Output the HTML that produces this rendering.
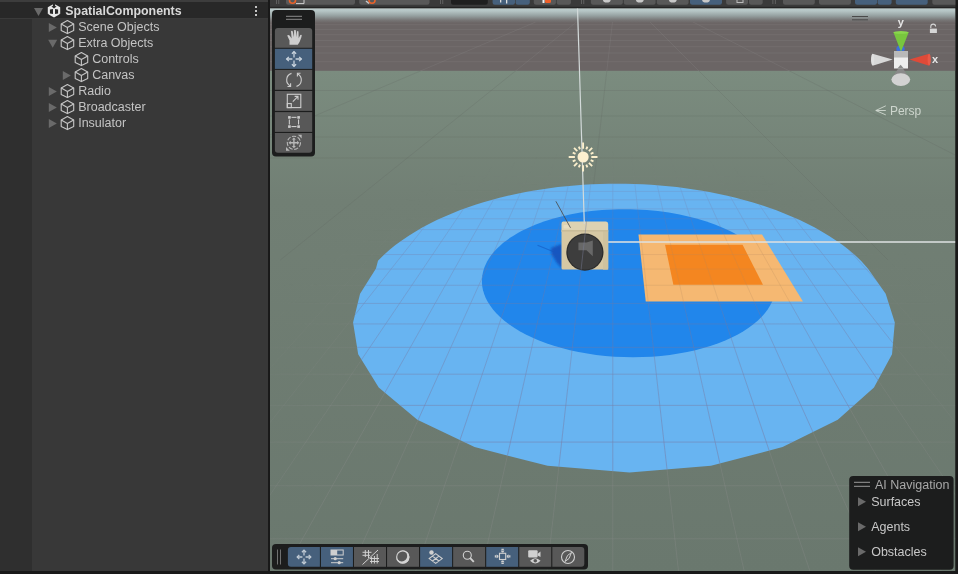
<!DOCTYPE html><html><head><meta charset="utf-8"><style>html,body{margin:0;padding:0;background:#191919;overflow:hidden}svg{display:block;will-change:transform}text{font-family:"Liberation Sans",sans-serif}</style></head><body><svg width="958" height="574" viewBox="0 0 958 574"><defs><linearGradient id="sky" x1="0" y1="8.4" x2="0" y2="23" gradientUnits="userSpaceOnUse"><stop offset="0" stop-color="#bdcccc"/><stop offset="0.18" stop-color="#b5c5c5"/><stop offset="0.5" stop-color="#96a1a1"/><stop offset="0.82" stop-color="#767474"/><stop offset="1" stop-color="#6b6565"/></linearGradient><linearGradient id="gnd" x1="0" y1="71" x2="0" y2="571" gradientUnits="userSpaceOnUse"><stop offset="0" stop-color="#7b8c7f"/><stop offset="0.26" stop-color="#717f74"/><stop offset="1" stop-color="#6a786e"/></linearGradient><linearGradient id="gfade" x1="0" y1="150" x2="0" y2="480" gradientUnits="userSpaceOnUse"><stop offset="0" stop-color="#fff" stop-opacity="0.3"/><stop offset="0.35" stop-color="#fff" stop-opacity="0.6"/><stop offset="1" stop-color="#fff" stop-opacity="1"/></linearGradient><radialGradient id="rfade" cx="612" cy="620" r="470" gradientUnits="userSpaceOnUse"><stop offset="0" stop-color="#fff"/><stop offset="0.68" stop-color="#fff"/><stop offset="1" stop-color="#fff" stop-opacity="0"/></radialGradient><mask id="rm"><rect x="0" y="0" width="958" height="574" fill="url(#rfade)"/></mask><mask id="gm"><rect x="0" y="0" width="958" height="574" fill="url(#gfade)"/></mask><clipPath id="sc"><rect x="270" y="8.4" width="685.5" height="562.6"/></clipPath><filter id="blur1" x="-50%" y="-50%" width="200%" height="200%"><feGaussianBlur stdDeviation="1.6"/></filter><filter id="blur0" x="-50%" y="-50%" width="200%" height="200%"><feGaussianBlur stdDeviation="0.8"/></filter></defs><rect x="0" y="0" width="268" height="571" fill="#383838"/><rect x="0" y="0" width="268" height="2" fill="#3d3d3d"/><rect x="0" y="2" width="268" height="16" fill="#282828"/><rect x="0" y="18" width="268" height="1" fill="#3a3a3a"/><rect x="0" y="19" width="32" height="552" fill="#2f2f2f"/><path d="M34 8 L43 8 L38.5 16 Z" fill="#6a6a6a"/><path d="M54 3.8 L60.2 7.3 L60.2 14 L54 17.5 L47.8 14 L47.8 7.3 Z" fill="#e8e8e8"/><path d="M52.9 3.6 L55.1 3.6 L55.1 6.1 L56.6 6.5 L54 8.6 L51.4 6.5 L52.9 6.1 Z" fill="#282828"/><path d="M49.9 9.6 L53 8.9 L53 13.9 L49.9 13.4 Z" fill="#282828"/><path d="M58.1 9.6 L55 8.9 L55 13.9 L58.1 13.4 Z" fill="#282828"/><path d="M47.8 13.4 L49.2 14.4 L47.8 14.4 Z M60.2 13.4 L58.8 14.4 L60.2 14.4 Z" fill="#282828"/><text x="65.3" y="14.8" font-size="12.4" font-weight="bold" fill="#d9d9d9">SpatialComponents</text><rect x="255" y="6" width="2" height="2" fill="#c4c4c4"/><rect x="255" y="10" width="2" height="2" fill="#c4c4c4"/><rect x="255" y="14" width="2" height="2" fill="#c4c4c4"/><path d="M48.8 23.0 L56.8 27.5 L48.8 32.0 Z" fill="#6a6a6a"/><g fill="none" stroke="#c6c6c6" stroke-width="1.1" stroke-linejoin="round"><path d="M67.4 20.6 L73.7 24.0 L73.7 30.5 L67.4 33.6 L61.2 30.5 L61.2 24.0 Z"/><path d="M61.2 24.0 L67.4 27.5 L73.7 24.0 M67.4 27.5 L67.4 33.6"/></g><text x="78.2" y="30.9" font-size="12.5" fill="#c4c4c4">Scene Objects</text><path d="M48.2 39.7 L57.2 39.7 L52.7 47.7 Z" fill="#6a6a6a"/><g fill="none" stroke="#c6c6c6" stroke-width="1.1" stroke-linejoin="round"><path d="M67.4 36.6 L73.7 40.0 L73.7 46.5 L67.4 49.6 L61.2 46.5 L61.2 40.0 Z"/><path d="M61.2 40.0 L67.4 43.5 L73.7 40.0 M67.4 43.5 L67.4 49.6"/></g><text x="78.2" y="46.9" font-size="12.5" fill="#c4c4c4">Extra Objects</text><g fill="none" stroke="#c6c6c6" stroke-width="1.1" stroke-linejoin="round"><path d="M81.4 52.6 L87.7 56.0 L87.7 62.5 L81.4 65.6 L75.2 62.5 L75.2 56.0 Z"/><path d="M75.2 56.0 L81.4 59.5 L87.7 56.0 M81.4 59.5 L81.4 65.6"/></g><text x="92.2" y="62.9" font-size="12.5" fill="#c4c4c4">Controls</text><path d="M62.8 71.0 L70.8 75.5 L62.8 80.0 Z" fill="#6a6a6a"/><g fill="none" stroke="#c6c6c6" stroke-width="1.1" stroke-linejoin="round"><path d="M81.4 68.6 L87.7 72.0 L87.7 78.5 L81.4 81.6 L75.2 78.5 L75.2 72.0 Z"/><path d="M75.2 72.0 L81.4 75.5 L87.7 72.0 M81.4 75.5 L81.4 81.6"/></g><text x="92.2" y="78.9" font-size="12.5" fill="#c4c4c4">Canvas</text><path d="M48.8 87.0 L56.8 91.5 L48.8 96.0 Z" fill="#6a6a6a"/><g fill="none" stroke="#c6c6c6" stroke-width="1.1" stroke-linejoin="round"><path d="M67.4 84.6 L73.7 88.0 L73.7 94.5 L67.4 97.6 L61.2 94.5 L61.2 88.0 Z"/><path d="M61.2 88.0 L67.4 91.5 L73.7 88.0 M67.4 91.5 L67.4 97.6"/></g><text x="78.2" y="94.9" font-size="12.5" fill="#c4c4c4">Radio</text><path d="M48.8 103.0 L56.8 107.5 L48.8 112.0 Z" fill="#6a6a6a"/><g fill="none" stroke="#c6c6c6" stroke-width="1.1" stroke-linejoin="round"><path d="M67.4 100.6 L73.7 104.0 L73.7 110.5 L67.4 113.6 L61.2 110.5 L61.2 104.0 Z"/><path d="M61.2 104.0 L67.4 107.5 L73.7 104.0 M67.4 107.5 L67.4 113.6"/></g><text x="78.2" y="110.9" font-size="12.5" fill="#c4c4c4">Broadcaster</text><path d="M48.8 119.0 L56.8 123.5 L48.8 128.0 Z" fill="#6a6a6a"/><g fill="none" stroke="#c6c6c6" stroke-width="1.1" stroke-linejoin="round"><path d="M67.4 116.6 L73.7 120.0 L73.7 126.5 L67.4 129.6 L61.2 126.5 L61.2 120.0 Z"/><path d="M61.2 120.0 L67.4 123.5 L73.7 120.0 M67.4 123.5 L67.4 129.6"/></g><text x="78.2" y="126.9" font-size="12.5" fill="#c4c4c4">Insulator</text><rect x="268" y="0" width="2" height="574" fill="#191919"/><rect x="270" y="0" width="688" height="7" fill="#3a3a3a"/><rect x="270" y="6.8" width="688" height="1.6" fill="#242424"/><rect x="286" y="-4" width="69.0" height="8.7" rx="2.2" fill="#585858"/><rect x="359.2" y="-4" width="70.3" height="8.7" rx="2.2" fill="#585858"/><rect x="451" y="-4" width="36.8" height="8.7" rx="2.2" fill="#1f1f1f"/><rect x="492.6" y="-4" width="22.4" height="8.7" rx="2.2" fill="#46607c"/><rect x="515.6" y="-4" width="14.2" height="8.7" rx="2.2" fill="#46607c"/><rect x="533.8" y="-4" width="22.1" height="8.7" rx="2.2" fill="#585858"/><rect x="556.7" y="-4" width="14.2" height="8.7" rx="2.2" fill="#585858"/><rect x="590.9" y="-4" width="31.9" height="8.7" rx="2.2" fill="#585858"/><rect x="623.8" y="-4" width="31.8" height="8.7" rx="2.2" fill="#585858"/><rect x="656.8" y="-4" width="31.8" height="8.7" rx="2.2" fill="#585858"/><rect x="690" y="-4" width="32.0" height="8.7" rx="2.2" fill="#46607c"/><rect x="726.1" y="-4" width="21.9" height="8.7" rx="2.2" fill="#585858"/><rect x="749" y="-4" width="13.7" height="8.7" rx="2.2" fill="#585858"/><rect x="783" y="-4" width="31.8" height="8.7" rx="2.2" fill="#585858"/><rect x="819" y="-4" width="31.9" height="8.7" rx="2.2" fill="#585858"/><rect x="855" y="-4" width="22.0" height="8.7" rx="2.2" fill="#46607c"/><rect x="877.6" y="-4" width="14.0" height="8.7" rx="2.2" fill="#46607c"/><rect x="895.8" y="-4" width="31.9" height="8.7" rx="2.2" fill="#46607c"/><rect x="932.3" y="-4" width="29.7" height="8.7" rx="2.2" fill="#585858"/><rect x="276" y="0" width="0.8" height="4" fill="#6a6a6a"/><rect x="278.4" y="0" width="0.8" height="4" fill="#6a6a6a"/><rect x="440" y="0" width="0.8" height="4" fill="#6a6a6a"/><rect x="442.4" y="0" width="0.8" height="4" fill="#6a6a6a"/><rect x="581" y="0" width="0.8" height="4" fill="#6a6a6a"/><rect x="583.4" y="0" width="0.8" height="4" fill="#6a6a6a"/><rect x="772.5" y="0" width="0.8" height="4" fill="#6a6a6a"/><rect x="774.9" y="0" width="0.8" height="4" fill="#6a6a6a"/><circle cx="292.5" cy="0.3" r="3" fill="none" stroke="#e8622a" stroke-width="1.6"/><path d="M296 3.6 L304 3.6 L304 0" fill="none" stroke="#d0d0d0" stroke-width="1"/><circle cx="372" cy="0.3" r="3" fill="none" stroke="#e8622a" stroke-width="1.6"/><path d="M366 1 L369 3.5" stroke="#c8c8c8" stroke-width="1.5"/><rect x="545" y="-2" width="6" height="5" rx="1.5" fill="#f0602a"/><rect x="542.5" y="-2" width="2" height="5" fill="#f0f0f0"/><rect x="500" y="-1" width="1.3" height="3.5" fill="#e0e0e0"/><rect x="506" y="-1" width="1.3" height="4.5" fill="#e0e0e0"/><ellipse cx="606.8" cy="-1" rx="4" ry="3.6" fill="#c8c8c8"/><ellipse cx="639.8" cy="-1" rx="4" ry="3.6" fill="#c8c8c8"/><ellipse cx="672.8" cy="-1" rx="4" ry="3.6" fill="#c8c8c8"/><ellipse cx="706" cy="-1" rx="4" ry="3.6" fill="#c8c8c8"/><rect x="737" y="-2" width="6" height="4.5" fill="none" stroke="#bbb" stroke-width="1"/><g clip-path="url(#sc)"><rect x="270" y="8" width="688" height="566" fill="url(#gnd)"/><rect x="270" y="8" width="688" height="62.8" fill="#6b6565"/><rect x="270" y="8" width="688" height="15" fill="url(#sky)"/><clipPath id="outc"><polygon points="867.88,268.56 885.67,293.66 894.80,322.43 892.04,354.20 873.98,387.46 837.78,419.64 782.60,447.12 710.99,465.85 629.52,472.52 547.54,465.85 474.55,447.12 417.33,419.64 378.73,387.46 358.19,354.20 353.07,322.43 360.06,293.66 375.98,268.56 378.00,260.65 383.49,255.23 389.30,250.06 395.41,245.11 401.78,240.39 408.39,235.90 415.22,231.63 422.24,227.57 429.44,223.73 436.79,220.09 444.28,216.65 451.91,213.40 459.64,210.35 467.47,207.48 475.40,204.80 483.40,202.29 491.48,199.96 499.62,197.80 507.82,195.80 516.06,193.96 524.35,192.28 532.68,190.76 541.04,189.40 549.43,188.18 557.85,187.11 566.29,186.19 574.75,185.41 583.22,184.78 591.71,184.28 600.21,183.93 608.72,183.72 617.23,183.65 625.75,183.72 634.27,183.93 642.79,184.28 651.31,184.78 659.82,185.41 668.32,186.19 676.82,187.11 685.30,188.18 693.76,189.40 702.20,190.76 710.62,192.28 719.01,193.96 727.36,195.80 735.67,197.80 743.94,199.96 752.15,202.29 760.30,204.80 768.39,207.48 776.39,210.35 784.30,213.40 792.11,216.65 799.81,220.09 807.38,223.73 814.80,227.57 822.06,231.63 829.13,235.90 836.01,240.39 842.65,245.11 849.05,250.06 855.17,255.23 860.98,260.65"/></clipPath><g mask="url(#rm)"><g stroke="#8e8e8e" stroke-opacity="0.3" stroke-width="1"><line x1="270" y1="176.53" x2="958" y2="176.53"/><line x1="270" y1="183.69" x2="958" y2="183.69"/><line x1="270" y1="191.43" x2="958" y2="191.43"/><line x1="270" y1="199.79" x2="958" y2="199.79"/><line x1="270" y1="208.87" x2="958" y2="208.87"/><line x1="270" y1="218.76" x2="958" y2="218.76"/><line x1="270" y1="229.58" x2="958" y2="229.58"/><line x1="270" y1="241.45" x2="958" y2="241.45"/><line x1="270" y1="254.55" x2="958" y2="254.55"/><line x1="270" y1="269.08" x2="958" y2="269.08"/><line x1="270" y1="285.27" x2="958" y2="285.27"/><line x1="270" y1="303.44" x2="958" y2="303.44"/><line x1="270" y1="323.96" x2="958" y2="323.96"/><line x1="270" y1="347.34" x2="958" y2="347.34"/><line x1="270" y1="374.21" x2="958" y2="374.21"/><line x1="270" y1="405.40" x2="958" y2="405.40"/><line x1="270" y1="442.07" x2="958" y2="442.07"/><line x1="270" y1="485.80" x2="958" y2="485.80"/><line x1="270" y1="538.82" x2="958" y2="538.82"/><line x1="-117.37" y1="150" x2="-2014.90" y2="571"/><line x1="-99.11" y1="150" x2="-1949.21" y2="571"/><line x1="-80.86" y1="150" x2="-1883.51" y2="571"/><line x1="-62.60" y1="150" x2="-1817.82" y2="571"/><line x1="-44.35" y1="150" x2="-1752.13" y2="571"/><line x1="-26.10" y1="150" x2="-1686.44" y2="571"/><line x1="-7.84" y1="150" x2="-1620.74" y2="571"/><line x1="10.41" y1="150" x2="-1555.05" y2="571"/><line x1="28.67" y1="150" x2="-1489.36" y2="571"/><line x1="46.92" y1="150" x2="-1423.67" y2="571"/><line x1="65.18" y1="150" x2="-1357.97" y2="571"/><line x1="83.43" y1="150" x2="-1292.28" y2="571"/><line x1="101.68" y1="150" x2="-1226.59" y2="571"/><line x1="119.94" y1="150" x2="-1160.90" y2="571"/><line x1="138.19" y1="150" x2="-1095.20" y2="571"/><line x1="156.45" y1="150" x2="-1029.51" y2="571"/><line x1="174.70" y1="150" x2="-963.82" y2="571"/><line x1="192.95" y1="150" x2="-898.13" y2="571"/><line x1="211.21" y1="150" x2="-832.43" y2="571"/><line x1="229.46" y1="150" x2="-766.74" y2="571"/><line x1="247.72" y1="150" x2="-701.05" y2="571"/><line x1="265.97" y1="150" x2="-635.36" y2="571"/><line x1="284.23" y1="150" x2="-569.66" y2="571"/><line x1="302.48" y1="150" x2="-503.97" y2="571"/><line x1="320.73" y1="150" x2="-438.28" y2="571"/><line x1="338.99" y1="150" x2="-372.59" y2="571"/><line x1="357.24" y1="150" x2="-306.89" y2="571"/><line x1="375.50" y1="150" x2="-241.20" y2="571"/><line x1="393.75" y1="150" x2="-175.51" y2="571"/><line x1="412.00" y1="150" x2="-109.82" y2="571"/><line x1="430.26" y1="150" x2="-44.12" y2="571"/><line x1="448.51" y1="150" x2="21.57" y2="571"/><line x1="466.77" y1="150" x2="87.26" y2="571"/><line x1="485.02" y1="150" x2="152.95" y2="571"/><line x1="503.28" y1="150" x2="218.65" y2="571"/><line x1="521.53" y1="150" x2="284.34" y2="571"/><line x1="539.78" y1="150" x2="350.03" y2="571"/><line x1="558.04" y1="150" x2="415.72" y2="571"/><line x1="576.29" y1="150" x2="481.42" y2="571"/><line x1="594.55" y1="150" x2="547.11" y2="571"/><line x1="612.80" y1="150" x2="612.80" y2="571"/><line x1="631.05" y1="150" x2="678.49" y2="571"/><line x1="649.31" y1="150" x2="744.18" y2="571"/><line x1="667.56" y1="150" x2="809.88" y2="571"/><line x1="685.82" y1="150" x2="875.57" y2="571"/><line x1="704.07" y1="150" x2="941.26" y2="571"/><line x1="722.32" y1="150" x2="1006.95" y2="571"/><line x1="740.58" y1="150" x2="1072.65" y2="571"/><line x1="758.83" y1="150" x2="1138.34" y2="571"/><line x1="777.09" y1="150" x2="1204.03" y2="571"/><line x1="795.34" y1="150" x2="1269.72" y2="571"/><line x1="813.60" y1="150" x2="1335.42" y2="571"/><line x1="831.85" y1="150" x2="1401.11" y2="571"/><line x1="850.10" y1="150" x2="1466.80" y2="571"/><line x1="868.36" y1="150" x2="1532.49" y2="571"/><line x1="886.61" y1="150" x2="1598.19" y2="571"/><line x1="904.87" y1="150" x2="1663.88" y2="571"/><line x1="923.12" y1="150" x2="1729.57" y2="571"/><line x1="941.37" y1="150" x2="1795.26" y2="571"/><line x1="959.63" y1="150" x2="1860.96" y2="571"/><line x1="977.88" y1="150" x2="1926.65" y2="571"/><line x1="996.14" y1="150" x2="1992.34" y2="571"/><line x1="1014.39" y1="150" x2="2058.03" y2="571"/><line x1="1032.65" y1="150" x2="2123.73" y2="571"/><line x1="1050.90" y1="150" x2="2189.42" y2="571"/><line x1="1069.15" y1="150" x2="2255.11" y2="571"/><line x1="1087.41" y1="150" x2="2320.80" y2="571"/><line x1="1105.66" y1="150" x2="2386.50" y2="571"/><line x1="1123.92" y1="150" x2="2452.19" y2="571"/><line x1="1142.17" y1="150" x2="2517.88" y2="571"/><line x1="1160.42" y1="150" x2="2583.57" y2="571"/><line x1="1178.68" y1="150" x2="2649.27" y2="571"/><line x1="1196.93" y1="150" x2="2714.96" y2="571"/><line x1="1215.19" y1="150" x2="2780.65" y2="571"/><line x1="1233.44" y1="150" x2="2846.34" y2="571"/><line x1="1251.70" y1="150" x2="2912.04" y2="571"/><line x1="1269.95" y1="150" x2="2977.73" y2="571"/><line x1="1288.20" y1="150" x2="3043.42" y2="571"/><line x1="1306.46" y1="150" x2="3109.11" y2="571"/><line x1="1324.71" y1="150" x2="3174.81" y2="571"/></g></g><clipPath id="band"><rect x="270" y="22" width="688" height="49"/></clipPath><clipPath id="grn"><rect x="270" y="71" width="688" height="200"/></clipPath><g stroke="#9a9a9a" stroke-opacity="0.16" stroke-width="1"><line x1="270" y1="24.7" x2="958" y2="24.7"/><line x1="270" y1="29.4" x2="958" y2="29.4"/><line x1="270" y1="34.7" x2="958" y2="34.7"/><line x1="270" y1="40.5" x2="958" y2="40.5"/><line x1="270" y1="46.7" x2="958" y2="46.7"/><line x1="270" y1="53" x2="958" y2="53"/><line x1="270" y1="61.7" x2="958" y2="61.7"/><g clip-path="url(#band)"><line x1="535.7" y1="22" x2="-24.7" y2="260"/><line x1="576.5" y1="22" x2="280.3" y2="260"/><line x1="612.5" y1="22" x2="591.8" y2="200"/><line x1="650.0" y1="22" x2="888.0" y2="260"/><line x1="693.0" y1="22" x2="1162.0" y2="260"/></g></g><g stroke="#5f6360" stroke-opacity="0.22" stroke-width="1"><line x1="270" y1="90.5" x2="958" y2="90.5"/><line x1="270" y1="116" x2="958" y2="116"/><line x1="270" y1="137" x2="958" y2="137"/><line x1="270" y1="158" x2="958" y2="158"/><g clip-path="url(#grn)"><line x1="535.7" y1="22" x2="-24.7" y2="260"/><line x1="576.5" y1="22" x2="280.3" y2="260"/><line x1="612.5" y1="22" x2="591.8" y2="200"/><line x1="650.0" y1="22" x2="888.0" y2="260"/><line x1="693.0" y1="22" x2="1162.0" y2="260"/></g></g><polygon points="867.88,268.56 885.67,293.66 894.80,322.43 892.04,354.20 873.98,387.46 837.78,419.64 782.60,447.12 710.99,465.85 629.52,472.52 547.54,465.85 474.55,447.12 417.33,419.64 378.73,387.46 358.19,354.20 353.07,322.43 360.06,293.66 375.98,268.56 378.00,260.65 383.49,255.23 389.30,250.06 395.41,245.11 401.78,240.39 408.39,235.90 415.22,231.63 422.24,227.57 429.44,223.73 436.79,220.09 444.28,216.65 451.91,213.40 459.64,210.35 467.47,207.48 475.40,204.80 483.40,202.29 491.48,199.96 499.62,197.80 507.82,195.80 516.06,193.96 524.35,192.28 532.68,190.76 541.04,189.40 549.43,188.18 557.85,187.11 566.29,186.19 574.75,185.41 583.22,184.78 591.71,184.28 600.21,183.93 608.72,183.72 617.23,183.65 625.75,183.72 634.27,183.93 642.79,184.28 651.31,184.78 659.82,185.41 668.32,186.19 676.82,187.11 685.30,188.18 693.76,189.40 702.20,190.76 710.62,192.28 719.01,193.96 727.36,195.80 735.67,197.80 743.94,199.96 752.15,202.29 760.30,204.80 768.39,207.48 776.39,210.35 784.30,213.40 792.11,216.65 799.81,220.09 807.38,223.73 814.80,227.57 822.06,231.63 829.13,235.90 836.01,240.39 842.65,245.11 849.05,250.06 855.17,255.23 860.98,260.65" fill="#68b4f1"/><polygon points="769.87,264.66 771.67,268.11 773.16,271.64 774.32,275.23 775.14,278.90 775.61,282.62 775.70,286.39 775.40,290.20 774.71,294.03 773.60,297.89 772.06,301.76 770.09,305.61 767.67,309.45 764.79,313.25 761.46,317.01 757.66,320.70 753.39,324.30 748.66,327.81 743.48,331.20 737.84,334.45 731.77,337.55 725.26,340.48 718.36,343.23 711.06,345.77 703.41,348.10 695.42,350.18 687.13,352.02 678.57,353.60 669.78,354.91 660.80,355.94 651.67,356.68 642.43,357.12 633.14,357.27 623.82,357.12 614.53,356.68 605.32,355.94 596.22,354.91 587.28,353.60 578.53,352.02 570.03,350.18 561.79,348.10 553.87,345.77 546.27,343.23 539.04,340.48 532.20,337.55 525.76,334.45 519.74,331.20 514.16,327.81 509.02,324.30 504.33,320.70 500.10,317.01 496.32,313.25 493.00,309.45 490.13,305.61 487.71,301.76 485.72,297.89 484.15,294.03 483.01,290.20 482.27,286.39 481.92,282.62 481.95,278.90 482.34,275.23 483.08,271.64 484.16,268.11 485.55,264.66 487.25,261.30 489.24,258.03 491.51,254.85 494.03,251.76 496.80,248.77 499.81,245.89 503.03,243.11 506.46,240.44 510.08,237.87 513.88,235.42 517.85,233.07 521.98,230.83 526.26,228.71 530.68,226.69 535.23,224.79 539.89,222.99 544.66,221.31 549.54,219.74 554.51,218.28 559.56,216.93 564.70,215.69 569.90,214.56 575.17,213.54 580.49,212.62 585.87,211.82 591.29,211.12 596.76,210.53 602.25,210.05 607.78,209.67 613.32,209.41 618.89,209.25 624.46,209.19 630.04,209.25 635.62,209.41 641.20,209.67 646.77,210.05 652.32,210.53 657.85,211.12 663.36,211.82 668.83,212.62 674.26,213.54 679.65,214.56 684.99,215.69 690.26,216.93 695.48,218.28 700.62,219.74 705.68,221.31 710.65,222.99 715.52,224.79 720.29,226.69 724.94,228.71 729.47,230.83 733.87,233.07 738.11,235.42 742.20,237.87 746.13,240.44 749.87,243.11 753.41,245.89 756.76,248.77 759.88,251.76 762.76,254.85 765.40,258.03 767.77,261.30" fill="#2186eb"/><g clip-path="url(#outc)"><g mask="url(#gm)" stroke="#7a78a0" stroke-opacity="0.5" stroke-width="1"><line x1="270" y1="176.53" x2="958" y2="176.53"/><line x1="270" y1="183.69" x2="958" y2="183.69"/><line x1="270" y1="191.43" x2="958" y2="191.43"/><line x1="270" y1="199.79" x2="958" y2="199.79"/><line x1="270" y1="208.87" x2="958" y2="208.87"/><line x1="270" y1="218.76" x2="958" y2="218.76"/><line x1="270" y1="229.58" x2="958" y2="229.58"/><line x1="270" y1="241.45" x2="958" y2="241.45"/><line x1="270" y1="254.55" x2="958" y2="254.55"/><line x1="270" y1="269.08" x2="958" y2="269.08"/><line x1="270" y1="285.27" x2="958" y2="285.27"/><line x1="270" y1="303.44" x2="958" y2="303.44"/><line x1="270" y1="323.96" x2="958" y2="323.96"/><line x1="270" y1="347.34" x2="958" y2="347.34"/><line x1="270" y1="374.21" x2="958" y2="374.21"/><line x1="270" y1="405.40" x2="958" y2="405.40"/><line x1="270" y1="442.07" x2="958" y2="442.07"/><line x1="270" y1="485.80" x2="958" y2="485.80"/><line x1="270" y1="538.82" x2="958" y2="538.82"/><line x1="-117.37" y1="150" x2="-2014.90" y2="571"/><line x1="-99.11" y1="150" x2="-1949.21" y2="571"/><line x1="-80.86" y1="150" x2="-1883.51" y2="571"/><line x1="-62.60" y1="150" x2="-1817.82" y2="571"/><line x1="-44.35" y1="150" x2="-1752.13" y2="571"/><line x1="-26.10" y1="150" x2="-1686.44" y2="571"/><line x1="-7.84" y1="150" x2="-1620.74" y2="571"/><line x1="10.41" y1="150" x2="-1555.05" y2="571"/><line x1="28.67" y1="150" x2="-1489.36" y2="571"/><line x1="46.92" y1="150" x2="-1423.67" y2="571"/><line x1="65.18" y1="150" x2="-1357.97" y2="571"/><line x1="83.43" y1="150" x2="-1292.28" y2="571"/><line x1="101.68" y1="150" x2="-1226.59" y2="571"/><line x1="119.94" y1="150" x2="-1160.90" y2="571"/><line x1="138.19" y1="150" x2="-1095.20" y2="571"/><line x1="156.45" y1="150" x2="-1029.51" y2="571"/><line x1="174.70" y1="150" x2="-963.82" y2="571"/><line x1="192.95" y1="150" x2="-898.13" y2="571"/><line x1="211.21" y1="150" x2="-832.43" y2="571"/><line x1="229.46" y1="150" x2="-766.74" y2="571"/><line x1="247.72" y1="150" x2="-701.05" y2="571"/><line x1="265.97" y1="150" x2="-635.36" y2="571"/><line x1="284.23" y1="150" x2="-569.66" y2="571"/><line x1="302.48" y1="150" x2="-503.97" y2="571"/><line x1="320.73" y1="150" x2="-438.28" y2="571"/><line x1="338.99" y1="150" x2="-372.59" y2="571"/><line x1="357.24" y1="150" x2="-306.89" y2="571"/><line x1="375.50" y1="150" x2="-241.20" y2="571"/><line x1="393.75" y1="150" x2="-175.51" y2="571"/><line x1="412.00" y1="150" x2="-109.82" y2="571"/><line x1="430.26" y1="150" x2="-44.12" y2="571"/><line x1="448.51" y1="150" x2="21.57" y2="571"/><line x1="466.77" y1="150" x2="87.26" y2="571"/><line x1="485.02" y1="150" x2="152.95" y2="571"/><line x1="503.28" y1="150" x2="218.65" y2="571"/><line x1="521.53" y1="150" x2="284.34" y2="571"/><line x1="539.78" y1="150" x2="350.03" y2="571"/><line x1="558.04" y1="150" x2="415.72" y2="571"/><line x1="576.29" y1="150" x2="481.42" y2="571"/><line x1="594.55" y1="150" x2="547.11" y2="571"/><line x1="612.80" y1="150" x2="612.80" y2="571"/><line x1="631.05" y1="150" x2="678.49" y2="571"/><line x1="649.31" y1="150" x2="744.18" y2="571"/><line x1="667.56" y1="150" x2="809.88" y2="571"/><line x1="685.82" y1="150" x2="875.57" y2="571"/><line x1="704.07" y1="150" x2="941.26" y2="571"/><line x1="722.32" y1="150" x2="1006.95" y2="571"/><line x1="740.58" y1="150" x2="1072.65" y2="571"/><line x1="758.83" y1="150" x2="1138.34" y2="571"/><line x1="777.09" y1="150" x2="1204.03" y2="571"/><line x1="795.34" y1="150" x2="1269.72" y2="571"/><line x1="813.60" y1="150" x2="1335.42" y2="571"/><line x1="831.85" y1="150" x2="1401.11" y2="571"/><line x1="850.10" y1="150" x2="1466.80" y2="571"/><line x1="868.36" y1="150" x2="1532.49" y2="571"/><line x1="886.61" y1="150" x2="1598.19" y2="571"/><line x1="904.87" y1="150" x2="1663.88" y2="571"/><line x1="923.12" y1="150" x2="1729.57" y2="571"/><line x1="941.37" y1="150" x2="1795.26" y2="571"/><line x1="959.63" y1="150" x2="1860.96" y2="571"/><line x1="977.88" y1="150" x2="1926.65" y2="571"/><line x1="996.14" y1="150" x2="1992.34" y2="571"/><line x1="1014.39" y1="150" x2="2058.03" y2="571"/><line x1="1032.65" y1="150" x2="2123.73" y2="571"/><line x1="1050.90" y1="150" x2="2189.42" y2="571"/><line x1="1069.15" y1="150" x2="2255.11" y2="571"/><line x1="1087.41" y1="150" x2="2320.80" y2="571"/><line x1="1105.66" y1="150" x2="2386.50" y2="571"/><line x1="1123.92" y1="150" x2="2452.19" y2="571"/><line x1="1142.17" y1="150" x2="2517.88" y2="571"/><line x1="1160.42" y1="150" x2="2583.57" y2="571"/><line x1="1178.68" y1="150" x2="2649.27" y2="571"/><line x1="1196.93" y1="150" x2="2714.96" y2="571"/><line x1="1215.19" y1="150" x2="2780.65" y2="571"/><line x1="1233.44" y1="150" x2="2846.34" y2="571"/><line x1="1251.70" y1="150" x2="2912.04" y2="571"/><line x1="1269.95" y1="150" x2="2977.73" y2="571"/><line x1="1288.20" y1="150" x2="3043.42" y2="571"/><line x1="1306.46" y1="150" x2="3109.11" y2="571"/><line x1="1324.71" y1="150" x2="3174.81" y2="571"/></g></g><polygon points="638.45,234.54 762.07,234.54 802.94,301.46 645.76,301.46" fill="#f5b872"/><polygon points="665.03,244.80 742.58,244.80 762.99,284.78 673.37,284.78" fill="#f48620"/><clipPath id="orc"><polygon points="638.45,234.54 762.07,234.54 802.94,301.46 645.76,301.46"/></clipPath><g clip-path="url(#orc)"><g stroke="#b08a60" stroke-opacity="0.22" stroke-width="1"><line x1="270" y1="176.53" x2="958" y2="176.53"/><line x1="270" y1="183.69" x2="958" y2="183.69"/><line x1="270" y1="191.43" x2="958" y2="191.43"/><line x1="270" y1="199.79" x2="958" y2="199.79"/><line x1="270" y1="208.87" x2="958" y2="208.87"/><line x1="270" y1="218.76" x2="958" y2="218.76"/><line x1="270" y1="229.58" x2="958" y2="229.58"/><line x1="270" y1="241.45" x2="958" y2="241.45"/><line x1="270" y1="254.55" x2="958" y2="254.55"/><line x1="270" y1="269.08" x2="958" y2="269.08"/><line x1="270" y1="285.27" x2="958" y2="285.27"/><line x1="270" y1="303.44" x2="958" y2="303.44"/><line x1="270" y1="323.96" x2="958" y2="323.96"/><line x1="270" y1="347.34" x2="958" y2="347.34"/><line x1="270" y1="374.21" x2="958" y2="374.21"/><line x1="270" y1="405.40" x2="958" y2="405.40"/><line x1="270" y1="442.07" x2="958" y2="442.07"/><line x1="270" y1="485.80" x2="958" y2="485.80"/><line x1="270" y1="538.82" x2="958" y2="538.82"/><line x1="-117.37" y1="150" x2="-2014.90" y2="571"/><line x1="-99.11" y1="150" x2="-1949.21" y2="571"/><line x1="-80.86" y1="150" x2="-1883.51" y2="571"/><line x1="-62.60" y1="150" x2="-1817.82" y2="571"/><line x1="-44.35" y1="150" x2="-1752.13" y2="571"/><line x1="-26.10" y1="150" x2="-1686.44" y2="571"/><line x1="-7.84" y1="150" x2="-1620.74" y2="571"/><line x1="10.41" y1="150" x2="-1555.05" y2="571"/><line x1="28.67" y1="150" x2="-1489.36" y2="571"/><line x1="46.92" y1="150" x2="-1423.67" y2="571"/><line x1="65.18" y1="150" x2="-1357.97" y2="571"/><line x1="83.43" y1="150" x2="-1292.28" y2="571"/><line x1="101.68" y1="150" x2="-1226.59" y2="571"/><line x1="119.94" y1="150" x2="-1160.90" y2="571"/><line x1="138.19" y1="150" x2="-1095.20" y2="571"/><line x1="156.45" y1="150" x2="-1029.51" y2="571"/><line x1="174.70" y1="150" x2="-963.82" y2="571"/><line x1="192.95" y1="150" x2="-898.13" y2="571"/><line x1="211.21" y1="150" x2="-832.43" y2="571"/><line x1="229.46" y1="150" x2="-766.74" y2="571"/><line x1="247.72" y1="150" x2="-701.05" y2="571"/><line x1="265.97" y1="150" x2="-635.36" y2="571"/><line x1="284.23" y1="150" x2="-569.66" y2="571"/><line x1="302.48" y1="150" x2="-503.97" y2="571"/><line x1="320.73" y1="150" x2="-438.28" y2="571"/><line x1="338.99" y1="150" x2="-372.59" y2="571"/><line x1="357.24" y1="150" x2="-306.89" y2="571"/><line x1="375.50" y1="150" x2="-241.20" y2="571"/><line x1="393.75" y1="150" x2="-175.51" y2="571"/><line x1="412.00" y1="150" x2="-109.82" y2="571"/><line x1="430.26" y1="150" x2="-44.12" y2="571"/><line x1="448.51" y1="150" x2="21.57" y2="571"/><line x1="466.77" y1="150" x2="87.26" y2="571"/><line x1="485.02" y1="150" x2="152.95" y2="571"/><line x1="503.28" y1="150" x2="218.65" y2="571"/><line x1="521.53" y1="150" x2="284.34" y2="571"/><line x1="539.78" y1="150" x2="350.03" y2="571"/><line x1="558.04" y1="150" x2="415.72" y2="571"/><line x1="576.29" y1="150" x2="481.42" y2="571"/><line x1="594.55" y1="150" x2="547.11" y2="571"/><line x1="612.80" y1="150" x2="612.80" y2="571"/><line x1="631.05" y1="150" x2="678.49" y2="571"/><line x1="649.31" y1="150" x2="744.18" y2="571"/><line x1="667.56" y1="150" x2="809.88" y2="571"/><line x1="685.82" y1="150" x2="875.57" y2="571"/><line x1="704.07" y1="150" x2="941.26" y2="571"/><line x1="722.32" y1="150" x2="1006.95" y2="571"/><line x1="740.58" y1="150" x2="1072.65" y2="571"/><line x1="758.83" y1="150" x2="1138.34" y2="571"/><line x1="777.09" y1="150" x2="1204.03" y2="571"/><line x1="795.34" y1="150" x2="1269.72" y2="571"/><line x1="813.60" y1="150" x2="1335.42" y2="571"/><line x1="831.85" y1="150" x2="1401.11" y2="571"/><line x1="850.10" y1="150" x2="1466.80" y2="571"/><line x1="868.36" y1="150" x2="1532.49" y2="571"/><line x1="886.61" y1="150" x2="1598.19" y2="571"/><line x1="904.87" y1="150" x2="1663.88" y2="571"/><line x1="923.12" y1="150" x2="1729.57" y2="571"/><line x1="941.37" y1="150" x2="1795.26" y2="571"/><line x1="959.63" y1="150" x2="1860.96" y2="571"/><line x1="977.88" y1="150" x2="1926.65" y2="571"/><line x1="996.14" y1="150" x2="1992.34" y2="571"/><line x1="1014.39" y1="150" x2="2058.03" y2="571"/><line x1="1032.65" y1="150" x2="2123.73" y2="571"/><line x1="1050.90" y1="150" x2="2189.42" y2="571"/><line x1="1069.15" y1="150" x2="2255.11" y2="571"/><line x1="1087.41" y1="150" x2="2320.80" y2="571"/><line x1="1105.66" y1="150" x2="2386.50" y2="571"/><line x1="1123.92" y1="150" x2="2452.19" y2="571"/><line x1="1142.17" y1="150" x2="2517.88" y2="571"/><line x1="1160.42" y1="150" x2="2583.57" y2="571"/><line x1="1178.68" y1="150" x2="2649.27" y2="571"/><line x1="1196.93" y1="150" x2="2714.96" y2="571"/><line x1="1215.19" y1="150" x2="2780.65" y2="571"/><line x1="1233.44" y1="150" x2="2846.34" y2="571"/><line x1="1251.70" y1="150" x2="2912.04" y2="571"/><line x1="1269.95" y1="150" x2="2977.73" y2="571"/><line x1="1288.20" y1="150" x2="3043.42" y2="571"/><line x1="1306.46" y1="150" x2="3109.11" y2="571"/><line x1="1324.71" y1="150" x2="3174.81" y2="571"/></g></g><path d="M551 248 L562 244 L562 268.5 L557 263 L551.5 254 Z" fill="#1252bc" opacity="0.92" filter="url(#blur0)"/><line x1="537.5" y1="245.3" x2="553" y2="251.5" stroke="#1558c0" stroke-width="1.1" opacity="0.6"/><path d="M563 221.5 L606 221.5 Q608.2 221.5 608.2 224 L608.2 232 L561.5 232 L561.5 224 Q561.5 221.5 563 221.5 Z" fill="#ddd2b2"/><rect x="561.5" y="230.5" width="46.7" height="39.1" rx="1.5" fill="#d6c8a4"/><rect x="603" y="230.5" width="5.2" height="39.1" fill="#cfc29e"/><rect x="561.5" y="230" width="46.7" height="1.6" fill="#c9bc98"/><rect x="563.5" y="225" width="7" height="3.5" rx="1" fill="#e6dcc0"/><circle cx="584.9" cy="252.1" r="18.6" fill="#2c2c2c"/><circle cx="584.9" cy="252.1" r="17.4" fill="#3d3d3d"/><path d="M578.4 242.6 L586.5 242.6 L592.8 240.6 L592.8 256.3 L586.5 250.2 L578.4 250.2 Z" fill="#686868"/><line x1="555.9" y1="201.3" x2="570.5" y2="227.8" stroke="#4a4a4a" stroke-width="0.85"/><line x1="586.55" y1="221" x2="581.02" y2="270" stroke="#7a7f99" stroke-opacity="0.45" stroke-width="1"/><line x1="577.5" y1="8" x2="584.3" y2="224" stroke="#d3dada" stroke-width="1.2"/><line x1="608.2" y1="241.9" x2="958" y2="241.9" stroke="#dfe3e3" stroke-width="1.5"/><g transform="translate(583.1,157)" stroke="#fbefcc" stroke-width="1.9" stroke-linecap="butt"><line x1="8.20" y1="0.00" x2="14.40" y2="0.00"/><line x1="7.58" y1="3.14" x2="10.35" y2="4.29"/><line x1="5.80" y1="5.80" x2="9.05" y2="9.05"/><line x1="3.14" y1="7.58" x2="4.29" y2="10.35"/><line x1="0.00" y1="8.20" x2="0.00" y2="14.40"/><line x1="-3.14" y1="7.58" x2="-4.29" y2="10.35"/><line x1="-5.80" y1="5.80" x2="-9.05" y2="9.05"/><line x1="-7.58" y1="3.14" x2="-10.35" y2="4.29"/><line x1="-8.20" y1="0.00" x2="-14.40" y2="0.00"/><line x1="-7.58" y1="-3.14" x2="-10.35" y2="-4.29"/><line x1="-5.80" y1="-5.80" x2="-9.05" y2="-9.05"/><line x1="-3.14" y1="-7.58" x2="-4.29" y2="-10.35"/><line x1="-0.00" y1="-8.20" x2="-0.00" y2="-14.40"/><line x1="3.14" y1="-7.58" x2="4.29" y2="-10.35"/><line x1="5.80" y1="-5.80" x2="9.05" y2="-9.05"/><line x1="7.58" y1="-3.14" x2="10.35" y2="-4.29"/><circle r="5.6" fill="#fcf0cf" stroke="none"/></g><rect x="852" y="16" width="16" height="1" fill="#4a4a4a"/><rect x="852" y="19.3" width="16" height="1" fill="#4a4a4a"/><text x="900.8" y="26" font-size="11" font-weight="bold" fill="#e6e6e6" text-anchor="middle">y</text><path d="M930.8 28 L930.8 26.5 A2.4 2.4 0 0 1 935.6 26.5" fill="none" stroke="#d6d6d6" stroke-width="1.1"/><rect x="929.9" y="28.6" width="7" height="4.4" fill="#d6d6d6"/><path d="M900.6 65 L891.6 78.5 L909.8 78.5 Z" fill="#8a8a8a"/><ellipse cx="900.8" cy="79.6" rx="9.4" ry="6.3" fill="#d2d2d2"/><ellipse cx="900.5" cy="49" rx="4.2" ry="3.6" fill="#3f6fd8"/><path d="M893.4 32.2 L908.7 32.2 L901 51.7 Z" fill="#78c63e"/><ellipse cx="901" cy="32.4" rx="7.6" ry="1.4" fill="#8ad64e"/><path d="M892.7 59.5 L872.6 53.8 L872.6 65.7 Z" fill="#d8d8d8"/><ellipse cx="872.6" cy="59.7" rx="1.6" ry="5.9" fill="#e0e0e0"/><path d="M909.4 59.6 L929.2 53.8 L929.2 65.7 Z" fill="#df4a38"/><ellipse cx="929.2" cy="59.7" rx="1.6" ry="5.9" fill="#e85a48"/><rect x="894" y="51" width="14" height="6.5" fill="#b9b9b9"/><rect x="894" y="57.3" width="14" height="11.2" fill="#eeeeee"/><path d="M900.6 64.8 L897.4 68.5 L903.8 68.5 Z" fill="#8a8a8a"/><text x="935" y="63" font-size="11" font-weight="bold" fill="#e6e6e6" text-anchor="middle">x</text><text x="889.9" y="114.6" font-size="12" fill="#cdd5cd">Persp</text><path d="M885.8 105.8 L875.8 110.5 L885.8 114.9 M875.8 110.5 L885.8 110.5" fill="none" stroke="#d0d8d0" stroke-width="0.9"/></g><rect x="272" y="10" width="43" height="146.4" rx="4" fill="#1c1d1d"/><rect x="286" y="15.8" width="16" height="1" fill="#8a8a8a"/><rect x="286" y="18.8" width="16" height="1" fill="#8a8a8a"/><path d="M274.9 47.8 L274.9 30.9 Q274.9 27.9 277.9 27.9 L309.2 27.9 Q312.2 27.9 312.2 30.9 L312.2 47.8 Z" fill="#585858"/><rect x="274.9" y="48.8" width="37.3" height="20.1" fill="#46607c"/><rect x="274.9" y="69.9" width="37.3" height="19.9" fill="#585858"/><rect x="274.9" y="91" width="37.3" height="19.9" fill="#585858"/><rect x="274.9" y="112.1" width="37.3" height="19.8" fill="#585858"/><path d="M274.9 133 L274.9 149.7 Q274.9 152.7 277.9 152.7 L309.2 152.7 Q312.2 152.7 312.2 149.7 L312.2 133 Z" fill="#585858"/><path d="M289.5 44.8 L297.8 44.8 Q300 42 301.3 37.6 L301.8 35.2 Q301.3 34.2 300.3 35 L298.7 38.3 L298.5 31.6 Q297.7 30.6 296.9 31.6 L296.6 37.3 L295.8 30.3 Q294.9 29.6 294.1 30.3 L294 37.2 L292.7 31.2 Q291.8 30.5 291 31.3 L291.6 38.6 L289.8 35.8 Q288.3 34.4 287.2 35.6 L289.5 40.6 Z" fill="#cdcdcd"/><g fill="none" stroke="#c9d3dd" stroke-width="1.3" stroke-linecap="butt" stroke-linejoin="miter"><path d="M294 51.5 L294 57.4 M294 60.6 L294 66.5 M286.5 59 L292.4 59 M295.6 59 L301.5 59"/><path d="M291.9 53.8 L294 51.699999999999996 L296.1 53.8 M291.9 64.2 L294 66.3 L296.1 64.2 M288.8 56.9 L286.7 59 L288.8 61.1 M299.2 56.9 L301.3 59 L299.2 61.1"/></g><g fill="none" stroke="#cdcdcd" stroke-width="1.1"><path d="M291.5 73.4 A6.8 6.8 0 0 0 290.3 85.9"/><path d="M296.5 86.4 A6.8 6.8 0 0 0 297.7 73.9"/><path d="M287.5 86.5 L290.6 86.5 L290.6 83.3"/><path d="M300.5 73.2 L297.4 73.2 L297.4 76.4"/></g><g fill="none" stroke="#cdcdcd" stroke-width="1.1"><rect x="287.3" y="94.3" width="13.5" height="13.3"/><rect x="287.3" y="103.6" width="4" height="4"/><path d="M292.8 101.6 L298 96.4 M294.6 96.4 L298 96.4 L298 99.8"/></g><g fill="#cdcdcd"><rect x="288.1" y="116.1" width="2.6" height="2.6"/><rect x="297.3" y="116.1" width="2.6" height="2.6"/><rect x="288.1" y="125.3" width="2.6" height="2.6"/><rect x="297.3" y="125.3" width="2.6" height="2.6"/><rect x="291.5" y="116.8" width="5" height="1.1"/><rect x="291.5" y="126" width="5" height="1.1"/><rect x="288.8" y="119.5" width="1.1" height="5"/><rect x="298" y="119.5" width="1.1" height="5"/></g><g fill="none" stroke="#b8b8b8" stroke-width="1.1"><circle cx="293.9" cy="142.8" r="6.6" stroke-dasharray="4.2 1.6"/></g><g fill="#b8b8b8"><path d="M293.9 137.4 L295.9 139.6 L294.6 139.6 L294.6 142.1 L297.1 142.1 L297.1 140.8 L299.3 142.8 L297.1 144.8 L297.1 143.5 L294.6 143.5 L294.6 146 L295.9 146 L293.9 148.2 L291.9 146 L293.2 146 L293.2 143.5 L290.7 143.5 L290.7 144.8 L288.5 142.8 L290.7 140.8 L290.7 142.1 L293.2 142.1 L293.2 139.6 L291.9 139.6 Z"/><path d="M301.7 134.8 L301.7 138.6 L297.9 134.8 Z"/><path d="M286 150.8 L286 147 L289.8 150.8 Z"/></g><rect x="272" y="544" width="316" height="25.5" rx="4" fill="#1c1d1d"/><rect x="277" y="549.5" width="0.9" height="15" fill="#7a7a7a"/><rect x="280" y="549.5" width="0.9" height="15" fill="#7a7a7a"/><path d="M290.9 547 L319.9 547 L319.9 566.8 L290.9 566.8 Q287.9 566.8 287.9 563.8 L287.9 550 Q287.9 547 290.9 547 Z" fill="#46607c"/><rect x="320.95" y="547" width="32" height="19.8" fill="#46607c"/><rect x="354.00" y="547" width="32" height="19.8" fill="#585858"/><rect x="387.05" y="547" width="32" height="19.8" fill="#585858"/><rect x="420.10" y="547" width="32" height="19.8" fill="#46607c"/><rect x="453.15" y="547" width="32" height="19.8" fill="#585858"/><rect x="486.20" y="547" width="32" height="19.8" fill="#46607c"/><rect x="519.25" y="547" width="32" height="19.8" fill="#585858"/><path d="M552.3 547 L581.3 547 Q584.3 547 584.3 550 L584.3 563.8 Q584.3 566.8 581.3 566.8 L552.3 566.8 Z" fill="#585858"/><g fill="none" stroke="#c0cad4" stroke-width="1.3" stroke-linecap="butt" stroke-linejoin="miter"><path d="M304 550.0 L304 555.4 M304 558.6 L304 564.0 M297.0 557 L302.4 557 M305.6 557 L311.0 557"/><path d="M301.9 552.3 L304 550.1999999999999 L306.1 552.3 M301.9 561.7 L304 563.8000000000001 L306.1 561.7 M299.3 554.9 L297.2 557 L299.3 559.1 M308.7 554.9 L310.8 557 L308.7 559.1"/></g><g><rect x="331" y="550" width="12.2" height="5" fill="none" stroke="#cfcfcf" stroke-width="1"/><rect x="331" y="550" width="6.2" height="5" fill="#cfcfcf"/><rect x="331" y="558.2" width="12.2" height="1" fill="#cfcfcf"/><rect x="331" y="562.2" width="12.2" height="1" fill="#cfcfcf"/><circle cx="335.2" cy="558.7" r="1.6" fill="#cfcfcf"/><circle cx="339.2" cy="562.7" r="1.6" fill="#cfcfcf"/></g><g stroke="#d0d0d0" stroke-width="1" fill="none"><path d="M365.3 550 L365.3 557 M368.5 550 L368.5 558 M362.5 552.3 L371.5 552.3 M362.5 555.3 L370 555.3"/><path d="M371.6 557 L371.6 563.5 M374.4 556 L374.4 563.5 M377.2 554 L377.2 563.5 M370 558.5 L379 558.5 M370 561.5 L379 561.5"/><path d="M362.5 564.5 L378 550"/></g><circle cx="402.8" cy="557" r="6.6" fill="#d4d4d4"/><circle cx="401.7" cy="555.9" r="5.5" fill="#585858"/><circle cx="402.8" cy="557" r="6.1" fill="none" stroke="#d4d4d4" stroke-width="1.1"/><circle cx="431.5" cy="552.5" r="2.2" fill="#d0d0d0"/><g fill="none" stroke="#d0d0d0" stroke-width="1.1"><path d="M435.7 553.6 L442.2 558.6 L435.7 563.4 L429.2 558.6 Z M432.45 556.1 L438.95 561 M438.95 556.1 L432.45 561"/></g><circle cx="467.3" cy="555.3" r="4" fill="none" stroke="#d0d0d0" stroke-width="1.1"/><path d="M470.2 558.2 L473.8 561.8" stroke="#d0d0d0" stroke-width="1.9"/><g fill="#d0d0d0"><rect x="499.5" y="553.3" width="6.2" height="6.2" fill="none" stroke="#d0d0d0" stroke-width="1.1"/><path d="M500.8 550.5 L504.4 550.5 L503.4 552.4 L501.8 552.4 Z M501.4 550.1 L503.8 550.1 L503.8 548.8 L501.4 548.8 Z"/><path d="M500.8 562.3 L504.4 562.3 L503.4 560.4 L501.8 560.4 Z M501.4 562.7 L503.8 562.7 L503.8 564 L501.4 564 Z"/><path d="M496.5 554.6 L496.5 558.2 L498.4 557.2 L498.4 555.6 Z M496.1 555.2 L496.1 557.6 L494.8 557.6 L494.8 555.2 Z"/><path d="M508.7 554.6 L508.7 558.2 L506.8 557.2 L506.8 555.6 Z M509.1 555.2 L509.1 557.6 L510.4 557.6 L510.4 555.2 Z"/></g><g fill="#d0d0d0"><rect x="528.2" y="550.3" width="9.4" height="7.2" rx="1"/><path d="M537.6 553.8 L540.5 551.5 L540.5 557 L537.6 555.5 Z"/></g><path d="M530 560.8 Q535.3 555.6 540.6 560.8 Q535.3 566 530 560.8 Z" fill="#d0d0d0"/><circle cx="535.3" cy="560.8" r="1.8" fill="#585858"/><circle cx="568" cy="557" r="6.5" fill="none" stroke="#d0d0d0" stroke-width="1.1"/><path d="M571.5 552.5 L569 558.5 L565 561.5 L567.5 555.5 Z" fill="none" stroke="#d0d0d0" stroke-width="1"/><rect x="849.2" y="476" width="104.4" height="93.7" rx="4" fill="#1c1d1d"/><rect x="854" y="481.8" width="16" height="1" fill="#999"/><rect x="854" y="485.8" width="16" height="1" fill="#999"/><text x="875" y="489" font-size="12.5" fill="#a8a8a8">AI Navigation</text><path d="M858 497.2 L866 501.7 L858 506.2 Z" fill="#6a6a6a"/><text x="871.2" y="506.2" font-size="12.5" fill="#c8c8c8">Surfaces</text><path d="M858 522.2 L866 526.7 L858 531.2 Z" fill="#6a6a6a"/><text x="871.2" y="531.2" font-size="12.5" fill="#c8c8c8">Agents</text><path d="M858 547.2 L866 551.7 L858 556.2 Z" fill="#6a6a6a"/><text x="871.2" y="556.2" font-size="12.5" fill="#c8c8c8">Obstacles</text><rect x="955.5" y="0" width="3" height="574" fill="#191919"/><rect x="0" y="571" width="958" height="3" fill="#191919"/></svg></body></html>
